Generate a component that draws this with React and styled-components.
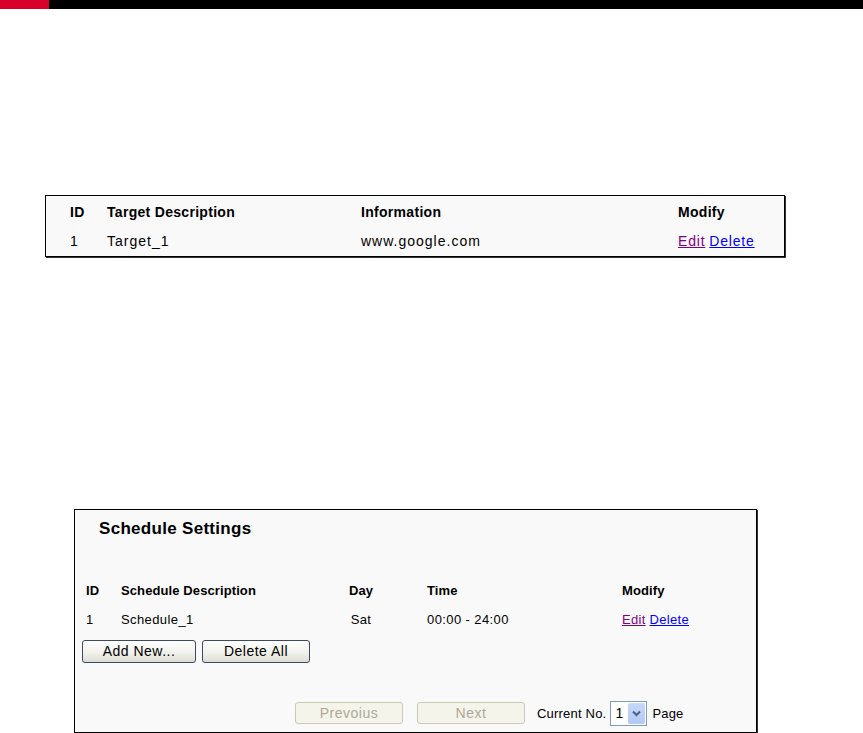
import React from 'react';
import styled, { createGlobalStyle } from 'styled-components';

const GlobalStyle = createGlobalStyle`
  html, body {
    margin: 0;
    padding: 0;
    background: #ffffff;
    font-family: "Liberation Sans", Arial, sans-serif;
    color: #000;
  }
`;

const Page = styled.div`
  width: 863px;
  height: 733px;
  overflow: hidden;
  display: flex;
  flex-direction: column;
`;

const TopBar = styled.div`
  display: flex;
  height: 9px;
  background: #000;
`;

const RedMark = styled.div`
  width: 49px;
  background: #d7002a;
`;

const Panel = styled.div`
  box-sizing: border-box;
  margin-left: ${p => p.left}px;
  margin-top: ${p => p.top}px;
  width: ${p => p.width}px;
  height: ${p => p.height}px;
  border: 1px solid #000;
  box-shadow: 1px 1px 0 #333;
  background: #f9f9f9;
`;

const Grid = styled.div`
  display: grid;
  grid-template-columns: ${p => p.cols};
  padding-left: ${p => p.pad}px;
  padding-top: ${p => p.padTop || 0}px;
  align-items: center;
`;

const Cell = styled.div`
  height: ${p => p.h}px;
  line-height: ${p => p.h}px;
  font-size: ${p => p.size}px;
  font-weight: ${p => (p.bold ? 700 : 400)};
  letter-spacing: ${p => (p.bold ? p.lsBold : p.ls)}px;
  text-align: ${p => (p.center ? 'center' : 'left')};
  padding-left: ${p => p.indent || 0}px;
  white-space: nowrap;
`;

const LinkText = styled.a`
  color: ${p => (p.visited ? '#800080' : '#0000ff')};
  text-decoration: underline;
  cursor: pointer;
  margin-right: ${p => p.gap || 0}px;
`;

const Title = styled.div`
  font-size: 17px;
  font-weight: 700;
  letter-spacing: 0.3px;
  height: 66px;
  line-height: 20px;
  padding: 9px 0 0 24px;
  box-sizing: border-box;
`;

const ButtonRow = styled.div`
  display: flex;
  gap: ${p => p.gap}px;
  align-items: center;
  padding-left: ${p => p.pad}px;
  margin-top: ${p => p.top}px;
`;

const Button = styled.button`
  box-sizing: border-box;
  width: ${p => p.w}px;
  height: ${p => p.h || 23}px;
  padding: 0;
  font-family: "Liberation Sans", Arial, sans-serif;
  font-size: 14px;
  letter-spacing: 0.5px;
  border-radius: 3px;
  color: ${p => (p.disabled ? '#aca899' : '#000')};
  border: 1px solid ${p => (p.disabled ? '#cac8bb' : '#3b4a5e')};
  background: ${p =>
    p.disabled ? '#f5f4ea' : 'linear-gradient(#ffffff, #f0f0ea 60%, #dcdcd4)'};
`;

const Label = styled.span`
  font-size: 13px;
  letter-spacing: 0.2px;
  margin-left: ${p => p.ml || 0}px;
`;

const SelectBox = styled.div`
  box-sizing: border-box;
  display: flex;
  align-items: stretch;
  width: 37px;
  height: 25px;
  margin-left: 4px;
  border: 1px solid #7f9db9;
  background: #fff;
`;

const SelectValue = styled.div`
  flex: 1;
  font-size: 14px;
  line-height: 23px;
  padding-left: 4px;
`;

const SelectArrow = styled.div`
  width: 17px;
  margin: 1px;
  display: flex;
  align-items: center;
  justify-content: center;
  border-radius: 2px;
  background: linear-gradient(#c7d8fb, #b2c9f6);
`;

const targetCols = '37px 254px 317px 1fr';
const schedCols = '35px 215px 50px 236px 1fr';

export default function App() {
  return (
    <>
      <GlobalStyle />
      <Page>
        <TopBar>
          <RedMark />
        </TopBar>

        <Panel left={45} top={186} width={740} height={62}>
          <Grid cols={targetCols} pad={24} padTop={2}>
            {['ID', 'Target Description', 'Information', 'Modify'].map(t => (
              <Cell key={t} h={29} size={14} bold lsBold={0.3}>{t}</Cell>
            ))}
            <Cell h={29} size={14} ls={1}>1</Cell>
            <Cell h={29} size={14} ls={1}>Target_1</Cell>
            <Cell h={29} size={14} ls={1}>www.google.com</Cell>
            <Cell h={29} size={14} ls={0.8}>
              <LinkText visited gap={4}>Edit</LinkText>
              <LinkText>Delete</LinkText>
            </Cell>
          </Grid>
        </Panel>

        <Panel left={74} top={252} width={683} height={226}>
          <Title>Schedule Settings</Title>
          <Grid cols={schedCols} pad={11}>
            <Cell h={29} size={13} bold lsBold={0.1}>ID</Cell>
            <Cell h={29} size={13} bold lsBold={0.1}>Schedule Description</Cell>
            <Cell h={29} size={13} bold lsBold={0.1} center>Day</Cell>
            <Cell h={29} size={13} bold lsBold={0.1} indent={41}>Time</Cell>
            <Cell h={29} size={13} bold lsBold={0.1}>Modify</Cell>
            <Cell h={29} size={13} ls={0.4}>1</Cell>
            <Cell h={29} size={13} ls={0.4}>Schedule_1</Cell>
            <Cell h={29} size={13} ls={0.4} center>Sat</Cell>
            <Cell h={29} size={13} ls={0.4} indent={41}>00:00 - 24:00</Cell>
            <Cell h={29} size={13} ls={0.3}>
              <LinkText visited gap={4}>Edit</LinkText>
              <LinkText>Delete</LinkText>
            </Cell>
          </Grid>
          <ButtonRow pad={7} gap={6} top={6}>
            <Button w={114}>Add New...</Button>
            <Button w={108}>Delete All</Button>
          </ButtonRow>
          <ButtonRow pad={220} gap={0} top={38}>
            <Button w={108} h={22} disabled>Prevoius</Button>
            <Button w={108} h={22} disabled style={{ marginLeft: 14 }}>Next</Button>
            <Label ml={12}>Current No.</Label>
            <SelectBox>
              <SelectValue>1</SelectValue>
              <SelectArrow>
                <svg width="9" height="7" viewBox="0 0 9 7">
                  <path d="M1 1.5 L4.5 5 L8 1.5" fill="none" stroke="#4d6185" strokeWidth="2" />
                </svg>
              </SelectArrow>
            </SelectBox>
            <Label ml={5}>Page</Label>
          </ButtonRow>
        </Panel>
      </Page>
    </>
  );
}
